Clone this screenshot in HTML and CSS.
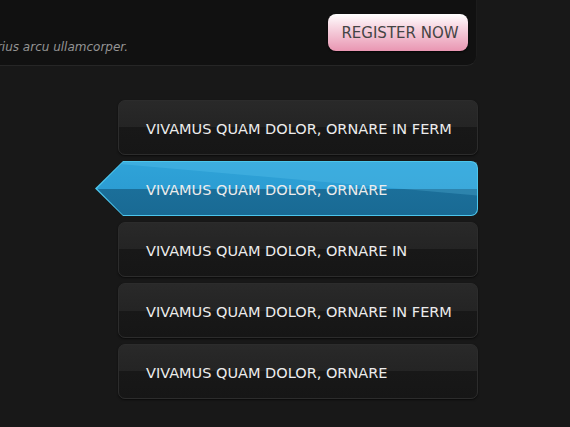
FILE: index.html
```html
<!DOCTYPE html>
<html>
<head>
<meta charset="utf-8">
<link rel="stylesheet" href="styles.css">
</head>
<body>
<header class="panel">
  <p class="intro"><span class="intro-text">Donec id elit non mi porta gravida at eget metus, sed varius arcu ullamcorper.</span></p>
  <a class="register" href="#">REGISTER NOW</a>
</header>
<nav class="menu">
  <a class="item" href="#"><span class="label">VIVAMUS QUAM DOLOR, ORNARE IN FERM</span></a>
  <a class="item active" href="#"><span class="face"><span class="label">VIVAMUS QUAM DOLOR, ORNARE</span></span></a>
  <a class="item" href="#"><span class="label">VIVAMUS QUAM DOLOR, ORNARE IN</span></a>
  <a class="item" href="#"><span class="label">VIVAMUS QUAM DOLOR, ORNARE IN FERM</span></a>
  <a class="item" href="#"><span class="label">VIVAMUS QUAM DOLOR, ORNARE</span></a>
</nav>
</body>
</html>
```
FILE: styles.css
```css
html, body {
  margin: 0;
  padding: 0;
}
body {
  background: #181818;
  font-family: "DejaVu Sans", Verdana, sans-serif;
  width: 570px;
  height: 427px;
  overflow: hidden;
}
.panel {
  width: 477px;
  height: 66px;
  box-sizing: border-box;
  background: #111111;
  border-bottom: 1px solid #262626;
  border-right: 1px solid #1c1c1c;
  border-radius: 0 0 10px 0;
  display: flex;
  align-items: flex-start;
  padding: 14px 8px 0 0;
  overflow: hidden;
}
.intro {
  margin: 26px auto 0 0;
  width: 128px;
  display: flex;
  justify-content: flex-end;
  overflow: hidden;
  font-style: italic;
  font-size: 12px;
  color: #949494;
}
.intro-text {
  white-space: nowrap;
  flex: none;
}
.register {
  display: flex;
  align-items: center;
  justify-content: center;
  width: 140px;
  height: 37px;
  box-sizing: border-box;
  border-radius: 8px;
  background: linear-gradient(to bottom, #ffffff 0%, #f7d7e2 35%, #e996b2 100%);
  box-shadow: 0 1px 2px rgba(0,0,0,0.8);
  color: #444444;
  font-size: 15px;
  text-decoration: none;
  padding: 1px 0 0 4px;
}
.menu {
  display: flex;
  flex-direction: column;
  gap: 6px;
  margin: 34px 0 0 118px;
  width: 360px;
}
.item {
  display: flex;
  align-items: center;
  height: 55px;
  box-sizing: border-box;
  border: 1px solid #2c2c2c;
  border-radius: 7px;
  background: linear-gradient(to bottom, #292929 0%, #242424 50%, #181818 50%, #161616 100%);
  box-shadow: 0 1px 2px rgba(0,0,0,0.6);
  text-decoration: none;
  color: #ececec;
  font-size: 14.5px;
  padding-left: 27px;
  padding-top: 2px;
}
.label {
  white-space: nowrap;
  position: relative;
}
.item.active {
  margin-left: -23px;
  width: 383px;
  padding: 1px;
  border: none;
  border-radius: 0 7px 7px 0;
  background: #4cc6ec;
  box-shadow: none;
  clip-path: polygon(28px 0, 100% 0, 100% 100%, 28px 100%, 0 50%);
}
.face {
  display: flex;
  align-items: center;
  position: relative;
  width: 100%;
  height: 100%;
  padding: 2px 0 0 50px;
  box-sizing: border-box;
  border-radius: 0 6px 6px 0;
  background: linear-gradient(to bottom, #2fa3d8 0%, #2c9dd3 50%, #1b6f9a 50%, #196a94 100%);
  clip-path: polygon(27px 0, 100% 0, 100% 100%, 27px 100%, 1px 50%);
}
.face::before {
  content: "";
  position: absolute;
  inset: 0;
  background: rgba(120, 220, 255, 0.2);
  clip-path: polygon(0 0, 100% 0, 100% 63%);
}
```
